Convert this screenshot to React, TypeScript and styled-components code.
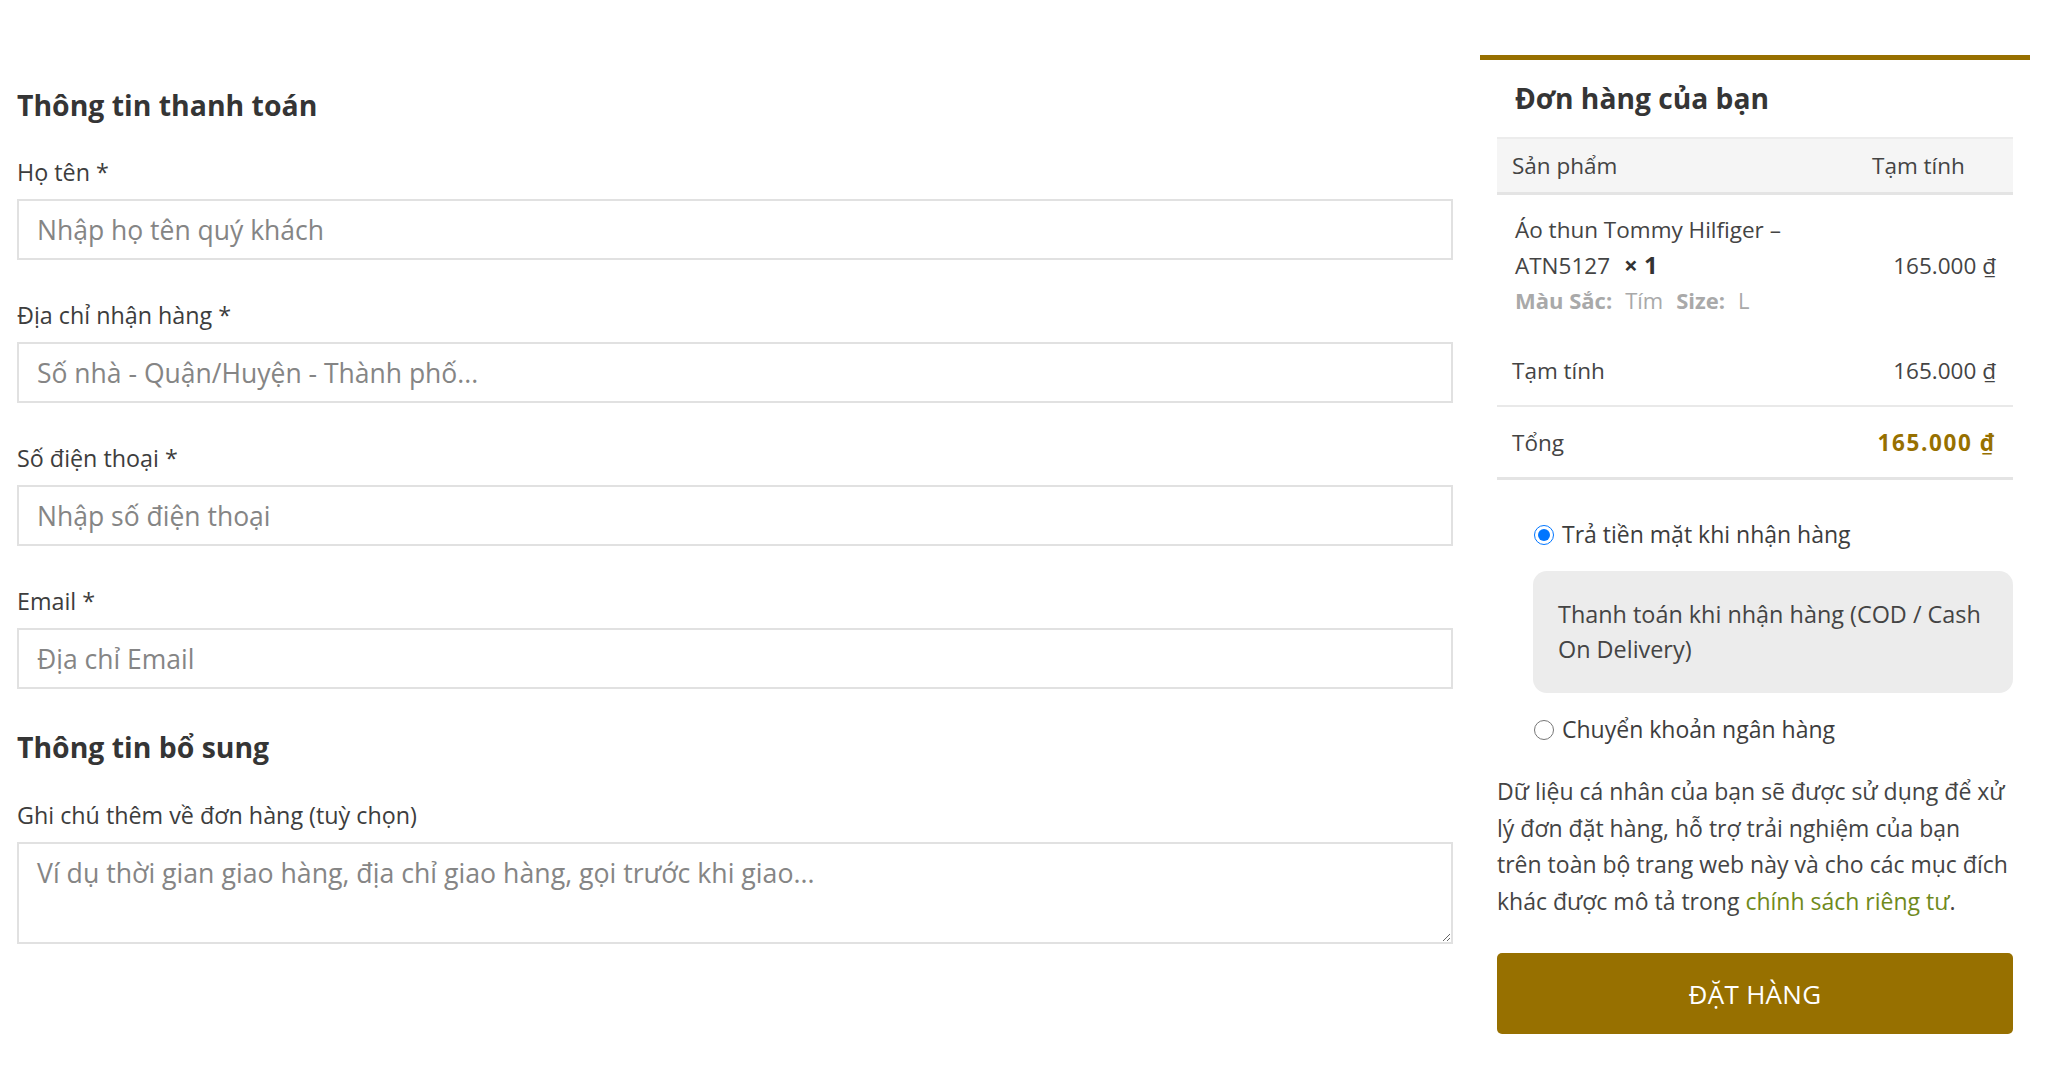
import React from "react";
import styled, { createGlobalStyle } from "styled-components";

const GOLD = "#977000";

const GlobalStyle = createGlobalStyle`
  html, body {
    margin: 0;
    padding: 0;
    background: #ffffff;
  }
  body {
    font-family: "Open Sans", "Noto Sans", "Liberation Sans", sans-serif;
    color: #444444;
    font-size: 22.5px;
  }
  * { box-sizing: border-box; }
`;

const Page = styled.div`
  display: grid;
  grid-template-columns: 1436px 550px;
  column-gap: 27px;
  padding: 0 18px 40px 17px;
  align-items: start;
`;

const BillingColumn = styled.section`
  display: flex;
  flex-direction: column;
  padding-top: 87px;
`;

const SectionTitle = styled.h3<{ $top?: number }>`
  margin: ${(p) => p.$top ?? 0}px 0 0;
  font-size: 28.4px;
  line-height: 36px;
  font-weight: 700;
  color: #353535;
`;

const Field = styled.div<{ $top: number }>`
  display: flex;
  flex-direction: column;
  margin-top: ${(p) => p.$top}px;
`;

const Label = styled.label`
  font-size: 23.3px;
  line-height: 34px;
  color: #3d3d3d;
  margin-bottom: 10px;
`;

const TextInput = styled.input`
  height: 61px;
  width: 100%;
  border: 2px solid #e1e1e1;
  padding: 0 18px;
  font-family: inherit;
  font-size: 26.5px;
  color: #444;
  background: #fff;
  outline: none;
  &::placeholder {
    color: #858585;
  }
`;

const TextArea = styled.textarea`
  height: 102px;
  width: 100%;
  border: 2px solid #e1e1e1;
  padding: 11px 18px;
  font-family: inherit;
  font-size: 26.7px;
  line-height: 36px;
  color: #444;
  background: #fff;
  outline: none;
  resize: vertical;
  &::placeholder {
    color: #858585;
  }
`;

const OrderPanel = styled.aside`
  margin-top: 55px;
  border-top: 5px solid ${GOLD};
  padding: 20px 17px 0;
  display: flex;
  flex-direction: column;
`;

const OrderTitle = styled.h3`
  margin: 0;
  padding-left: 18px;
  font-size: 28.2px;
  line-height: 36px;
  font-weight: 700;
  color: #353535;
`;

const OrderTable = styled.div`
  margin-top: 21px;
  display: flex;
  flex-direction: column;
`;

const Row = styled.div<{ $variant: "head" | "item" | "sub" | "total" }>`
  display: grid;
  grid-template-columns: 1fr 160px;
  align-items: center;
  line-height: 35px;
  background: ${(p) => (p.$variant === "head" ? "#f5f5f5" : "transparent")};
  border-top: ${(p) => (p.$variant === "head" ? "2px solid #ececec" : "none")};
  border-bottom: ${(p) =>
    p.$variant === "head" || p.$variant === "total"
      ? "3px solid #e4e4e4"
      : p.$variant === "sub"
      ? "2px solid #e9e9e9"
      : "none"};
  min-height: ${(p) =>
    p.$variant === "head" ? 58 : p.$variant === "item" ? 140 : p.$variant === "sub" ? 72 : 73}px;
`;

const Cell = styled.div<{ $pad?: number; $right?: boolean; $strong?: boolean }>`
  padding-left: ${(p) => p.$pad ?? 15}px;
  padding-right: ${(p) => (p.$right ? 17 : 0)}px;
  text-align: ${(p) => (p.$right ? "right" : "left")};
  white-space: ${(p) => (p.$right ? "nowrap" : "normal")};
  color: ${(p) => (p.$strong ? GOLD : "#444")};
  font-weight: ${(p) => (p.$strong ? 700 : 400)};
  letter-spacing: ${(p) => (p.$strong ? "1.6px" : "0")};
`;

const Qty = styled.strong`
  margin-left: 14px;
  font-size: 24px;
  color: #333;
`;

const Meta = styled.div`
  display: flex;
  gap: 13px;
  font-size: 22px;
  color: #a9a9a9;
`;

const MetaKey = styled.span`
  font-weight: 700;
`;

const PaymentList = styled.div`
  margin-top: 37px;
  padding-left: 36px;
  display: flex;
  flex-direction: column;
`;

const RadioRow = styled.label<{ $top?: number }>`
  display: flex;
  align-items: center;
  gap: 8px;
  font-size: 23px;
  line-height: 35px;
  color: #3d3d3d;
  margin-top: ${(p) => p.$top ?? 0}px;
`;

const Radio = styled.input`
  width: 20px;
  height: 20px;
  margin: 0 0 0 1px;
  accent-color: #0075ff;
`;

const PaymentBox = styled.div`
  margin-top: 19px;
  background: #ececec;
  border-radius: 14px;
  padding: 26px 20px 26px 25px;
  font-size: 23.4px;
  line-height: 35px;
  color: #444;
`;

const Privacy = styled.p`
  margin: 26px 0 0;
  font-size: 23px;
  line-height: 36.5px;
  color: #444;
`;

const PolicyLink = styled.a`
  color: #6f8a1c;
  text-decoration: none;
`;

const OrderButton = styled.button`
  margin-top: 34px;
  height: 81px;
  width: 100%;
  border: none;
  border-radius: 5px;
  background: ${GOLD};
  color: #ffffff;
  font-family: inherit;
  font-size: 26px;
  letter-spacing: 0.3px;
  cursor: pointer;
`;

export default function App() {
  return (
    <>
      <GlobalStyle />
      <Page>
        <BillingColumn>
          <SectionTitle>Thông tin thanh toán</SectionTitle>
          <Field $top={32}>
            <Label>Họ tên *</Label>
            <TextInput placeholder="Nhập họ tên quý khách" />
          </Field>
          <Field $top={38}>
            <Label>Địa chỉ nhận hàng *</Label>
            <TextInput placeholder="Số nhà - Quận/Huyện - Thành phố..." />
          </Field>
          <Field $top={38}>
            <Label>Số điện thoại *</Label>
            <TextInput placeholder="Nhập số điện thoại" />
          </Field>
          <Field $top={38}>
            <Label>Email *</Label>
            <TextInput placeholder="Địa chỉ Email" />
          </Field>
          <SectionTitle $top={40}>Thông tin bổ sung</SectionTitle>
          <Field $top={33}>
            <Label>Ghi chú thêm về đơn hàng (tuỳ chọn)</Label>
            <TextArea placeholder="Ví dụ thời gian giao hàng, địa chỉ giao hàng, gọi trước khi giao..." />
          </Field>
        </BillingColumn>

        <OrderPanel>
          <OrderTitle>Đơn hàng của bạn</OrderTitle>
          <OrderTable>
            <Row $variant="head">
              <Cell>Sản phẩm</Cell>
              <Cell $pad={19}>Tạm tính</Cell>
            </Row>
            <Row $variant="item">
              <Cell $pad={18}>
                Áo thun Tommy Hilfiger –<br />
                ATN5127<Qty>× 1</Qty>
                <Meta>
                  <MetaKey>Màu Sắc:</MetaKey>
                  <span>Tím</span>
                  <MetaKey>Size:</MetaKey>
                  <span>L</span>
                </Meta>
              </Cell>
              <Cell $right>165.000 ₫</Cell>
            </Row>
            <Row $variant="sub">
              <Cell>Tạm tính</Cell>
              <Cell $right>165.000 ₫</Cell>
            </Row>
            <Row $variant="total">
              <Cell>Tổng</Cell>
              <Cell $right $strong>
                165.000 ₫
              </Cell>
            </Row>
          </OrderTable>

          <PaymentList>
            <RadioRow>
              <Radio type="radio" name="pay" defaultChecked />
              Trả tiền mặt khi nhận hàng
            </RadioRow>
            <PaymentBox>Thanh toán khi nhận hàng (COD / Cash On Delivery)</PaymentBox>
            <RadioRow $top={19}>
              <Radio type="radio" name="pay" />
              Chuyển khoản ngân hàng
            </RadioRow>
          </PaymentList>

          <Privacy>
            Dữ liệu cá nhân của bạn sẽ được sử dụng để xử
            <br />
            lý đơn đặt hàng, hỗ trợ trải nghiệm của bạn
            <br />
            trên toàn bộ trang web này và cho các mục đích
            <br />
            khác được mô tả trong <PolicyLink href="#">chính sách riêng tư</PolicyLink>.
          </Privacy>

          <OrderButton>ĐẶT HÀNG</OrderButton>
        </OrderPanel>
      </Page>
    </>
  );
}
